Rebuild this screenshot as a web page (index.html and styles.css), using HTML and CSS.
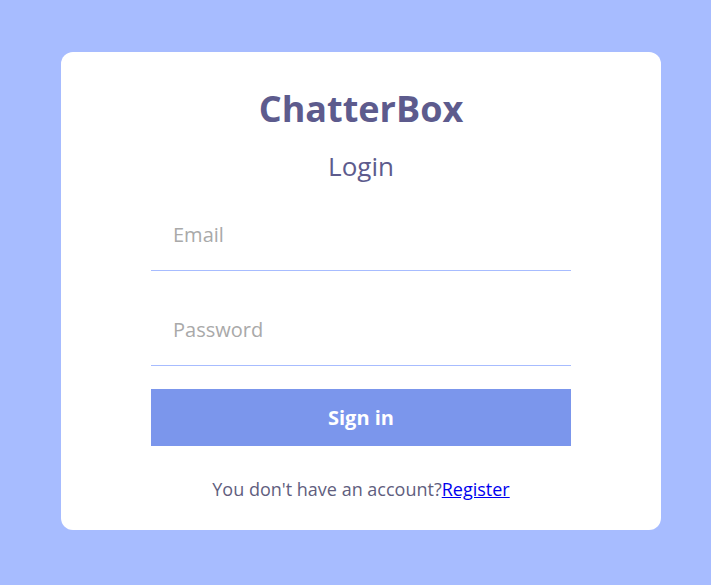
FILE: index.html
```html
<!DOCTYPE html>
<html>
<head>
<meta charset="utf-8">
<link rel="stylesheet" href="styles.css">
</head>
<body>
<div class="container">
  <div class="card">
    <span class="logo">ChatterBox</span>
    <span class="title">Login</span>
    <form class="form">
      <input type="email" placeholder="Email">
      <input type="password" placeholder="Password">
      <button type="button">Sign in</button>
    </form>
    <p class="footer">You don't have an account?<a href="#">Register</a></p>
  </div>
</div>
</body>
</html>
```
FILE: styles.css
```css
html, body {
  margin: 0;
  padding: 0;
}
body {
  background: #a7bcff;
  font-family: "Open Sans", "Liberation Sans", sans-serif;
}
.container {
  height: 585px;
  box-sizing: border-box;
  padding: 52px 0 0 61px;
}
.card {
  width: 600px;
  height: 478px;
  box-sizing: border-box;
  background: #fff;
  border-radius: 12px;
  padding: 32px 90px 28px;
  display: flex;
  flex-direction: column;
  align-items: center;
}
.logo {
  color: #5d5b8d;
  font-weight: 700;
  font-size: 36px;
  line-height: 49px;
}
.title {
  color: #5d5b8d;
  font-size: 26px;
  line-height: 35px;
  margin-top: 16px;
}
.form {
  margin-top: 15px;
  width: 100%;
  display: flex;
  flex-direction: column;
  gap: 23px;
}
.form input {
  font-family: inherit;
  font-size: 20px;
  line-height: 27px;
  padding: 22px 22px;
  border: none;
  border-bottom: 1px solid #a7bcff;
  outline: none;
  width: 100%;
  box-sizing: border-box;
  color: #333;
}
.form input::placeholder {
  color: #a9a9a9;
}
.form button {
  font-family: inherit;
  background: #7b96ec;
  color: #fff;
  border: none;
  font-weight: 700;
  font-size: 20px;
  height: 57px;
  padding: 0;
}
.footer {
  margin: 31px 0 0;
  color: #5f5e7e;
  font-size: 18px;
  line-height: 25px;
}
.footer a {
  color: #0000ee;
}
```
